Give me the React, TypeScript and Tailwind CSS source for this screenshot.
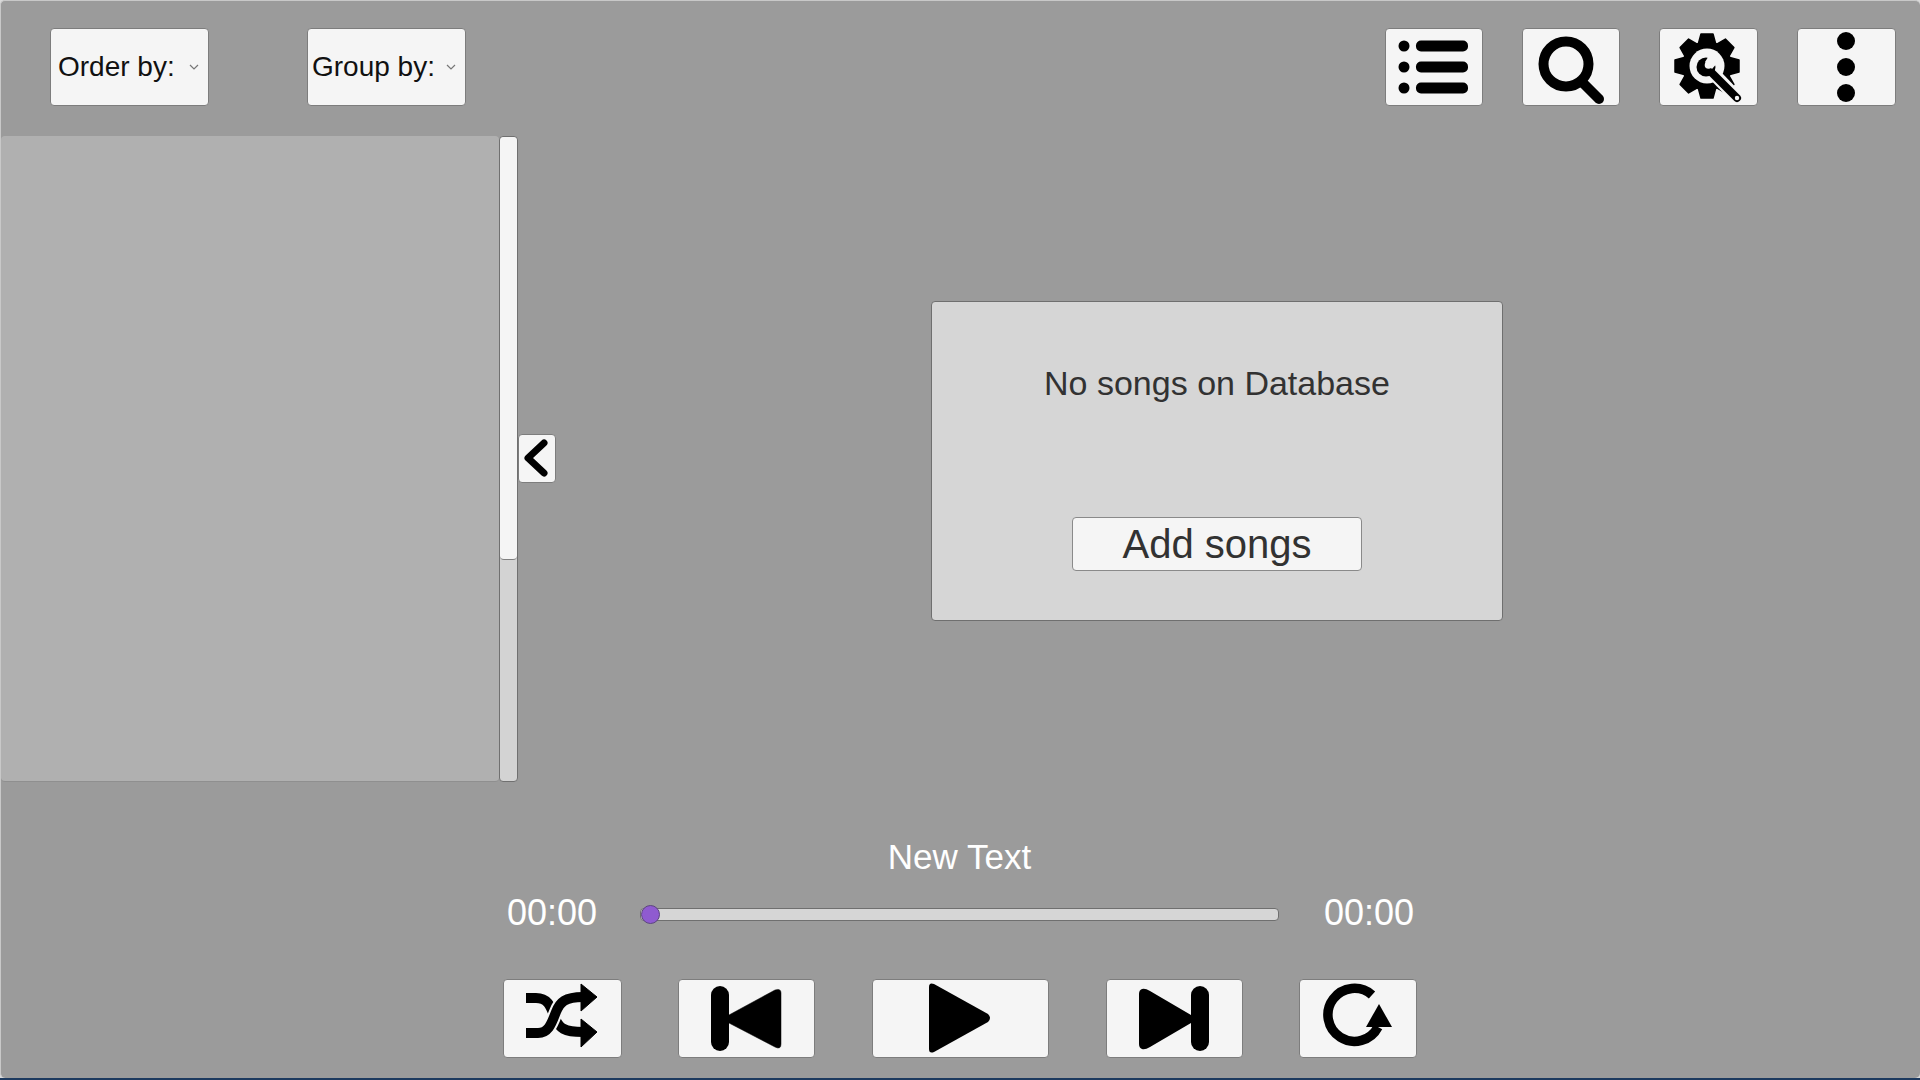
const FONT = "font-['Liberation_Sans',Arial,sans-serif]";
const BTN = "flex shrink-0 items-center justify-center rounded-[4px] border border-[#7d7d7d] bg-[#f5f5f5]";

function Dropdown({ label, left, pad }: { label: string; left: string; pad: string }) {
  return (
    <div className={`${BTN} relative h-[78px] w-[159px] ${left}`}>
      <span className={`absolute text-[28px] leading-none text-[#111] ${pad}`}>{label}</span>
      <svg className="absolute right-[9px] top-[35px]" width="10" height="7" viewBox="0 0 10 7">
        <path d="M1 1l4 4 4-4" fill="none" stroke="#777" strokeWidth="1.2" />
      </svg>
    </div>
  );
}

// w and h are the outer size of the button; icon paths are in those coordinates
function IconButton({ w, h, className = "", children }: { w: number; h: number; className?: string; children: React.ReactNode }) {
  return (
    <div className={`${BTN} ${className}`}>
      <svg width={w - 2} height={h - 2} viewBox={`1 1 ${w - 2} ${h - 2}`}>
        {children}
      </svg>
    </div>
  );
}

function GearIcon() {
  const angles = [0, 45, 90, 135, 180, 225, 270, 315];
  return (
    <>
      {angles.map((a) => (
        <path key={a} d="M42 6h12l3 11H39z" transform={`rotate(${a} 48 38)`} strokeLinejoin="round" stroke="#000" strokeWidth="1.5" />
      ))}
      <circle cx="48" cy="38" r="25" />
      <circle cx="48" cy="38" r="17.500" fill="#f5f5f5" />
      <path d="M54 45l24 25" stroke="#f5f5f5" strokeWidth="13" strokeLinecap="round" />
      <circle cx="47" cy="39" r="9.500" />
      <path d="M51 43l27 27" stroke="#000" strokeWidth="8" strokeLinecap="round" />
      <path d="M46 34l5-8 9 7-7 8z" fill="#f5f5f5" />
      <circle cx="49.500" cy="37" r="3.800" fill="#f5f5f5" />
      <circle cx="78" cy="70" r="2.200" fill="#f5f5f5" />
    </>
  );
}

export default function App() {
  return (
    <div className={`${FONT} flex h-[1080px] w-[1920px] flex-col overflow-hidden bg-[#d9d9d9]`}>
      <div className="flex min-h-0 flex-1 flex-col rounded-[5px] border-l border-t border-[#c8c8c8] bg-[#9b9b9b]">
        {/* Top bar */}
        <div className="flex h-[135px] shrink-0 items-start pr-[24px] pt-[27px]">
          <Dropdown label="Order by:" left="ml-[49px]" pad="left-[7px]" />
          <Dropdown label="Group by:" left="ml-[98px]" pad="left-[4px]" />
          <IconButton w={98} h={78} className="ml-auto">
            {[18, 39, 60].map((y) => (
              <g key={y}>
                <circle cx="19" cy={y} r="5.500" />
                <rect x="31" y={y - 5.5} width="52" height="11" rx="5" />
              </g>
            ))}
          </IconButton>
          <IconButton w={98} h={78} className="ml-[39px]">
            <circle cx="44" cy="36" r="22.500" fill="none" stroke="#000" strokeWidth="10" />
            <path d="M60 54l17 17" stroke="#000" strokeWidth="10" strokeLinecap="round" />
          </IconButton>
          <IconButton w={99} h={78} className="ml-[39px]">
            <GearIcon />
          </IconButton>
          <IconButton w={99} h={78} className="ml-[39px]">
            <circle cx="49" cy="13" r="9" />
            <circle cx="49" cy="39" r="9" />
            <circle cx="49" cy="65" r="9" />
          </IconButton>
        </div>

        {/* Song list, collapse handle and empty-library dialog */}
        <div className="flex h-[646px] shrink-0 items-start">
          <div className="h-full w-[498px] rounded-[4px] border-b border-[#8f8f8f] bg-[#b0b0b0]" />
          <div className="flex h-full w-[19px] flex-col rounded-[4px] border border-[#707070] bg-[#d3d3d3]">
            <div className="h-[423px] rounded-[4px] border-b border-[#808080] bg-[#f5f5f5]" />
          </div>
          <IconButton w={38} h={49} className="mt-[298px]">
            <path d="M26 9L10 24l16 15" fill="none" stroke="#000" strokeWidth="7" strokeLinecap="round" strokeLinejoin="round" />
          </IconButton>
          <div className="ml-[375px] mt-[165px] flex h-[320px] w-[572px] flex-col items-center rounded-[4px] border border-[#6f6f6f] bg-[#d6d6d6]">
            <p className="mt-[61px] text-[34px] leading-[40px] text-[#323232]">No songs on Database</p>
            <button className="mt-[114px] flex h-[54px] w-[290px] items-center justify-center rounded-[4px] border border-[#8a8a8a] bg-[#f5f5f5] text-[40px] leading-none text-[#323232]">
              Add songs
            </button>
          </div>
        </div>

        {/* Player */}
        <div className="flex flex-1 flex-col items-center">
          <p className="mt-[55px] pr-[2px] text-[35px] leading-[40px] text-white">New Text</p>
          <div className="mt-[18px] flex h-[36px] w-[907px] items-center">
            <span className="w-[89px] text-[36px] leading-none text-white">00:00</span>
            <div className="relative ml-[44px] mt-[2px] h-[13px] w-[639px] rounded-[4px] border border-[#6f6f6f] bg-[#d6d6d6]">
              <div className="absolute -top-[4px] left-[0px] h-[19px] w-[19px] rounded-full border border-[#5d4580] bg-[#8f5bd0]" />
            </div>
            <span className="ml-[45px] w-[89px] text-[36px] leading-none text-white">00:00</span>
          </div>
          <div className="mt-[48px] flex h-[79px] items-start pr-[2px]">
            <IconButton w={119} h={79}>
              <g fill="none" stroke="#000" strokeWidth="10">
                <path d="M23 19h10c13 0 15 10 19 20s9 14 28 14" />
                <path d="M23 54h12c11 0 14-11 18-21s9-15 27-15" stroke="#f5f5f5" strokeWidth="14" />
                <path d="M23 54h12c11 0 14-11 18-21s9-15 27-15" />
              </g>
              <path d="M78 5l16 13-16 14zM78 40l16 13-16 15z" strokeLinejoin="round" stroke="#000" strokeWidth="1" />
            </IconButton>
            <IconButton w={137} h={79} className="ml-[56px]">
              <rect x="33" y="7" width="18" height="65" rx="9" />
              <path d="M51 36L97 11q6-2 6 3v51q0 6-6 3L51 44z" stroke="#000" strokeWidth="0.5" />
            </IconButton>
            <IconButton w={177} h={79} className="ml-[57px]">
              <path d="M57 8q0-5 5-3l54 30q4 4 0 8L62 73q-5 2-5-3z" />
            </IconButton>
            <IconButton w={137} h={79} className="ml-[57px]">
              <rect x="85" y="7" width="18" height="65" rx="9" />
              <path d="M85 36L44 12q-5-3-8-2t-3 5v50q0 4 3 5t8-2L85 44z" />
            </IconButton>
            <IconButton w={118} h={79} className="ml-[56px]">
              <path d="M73 16A26.500 26.500 0 1 0 79 48" fill="none" stroke="#000" strokeWidth="9.500" />
              <path d="M80 25L67 48h26z" />
            </IconButton>
          </div>
        </div>
      </div>
      <div className="h-[2px] shrink-0 bg-[#1d3a5f]" />
    </div>
  );
}
